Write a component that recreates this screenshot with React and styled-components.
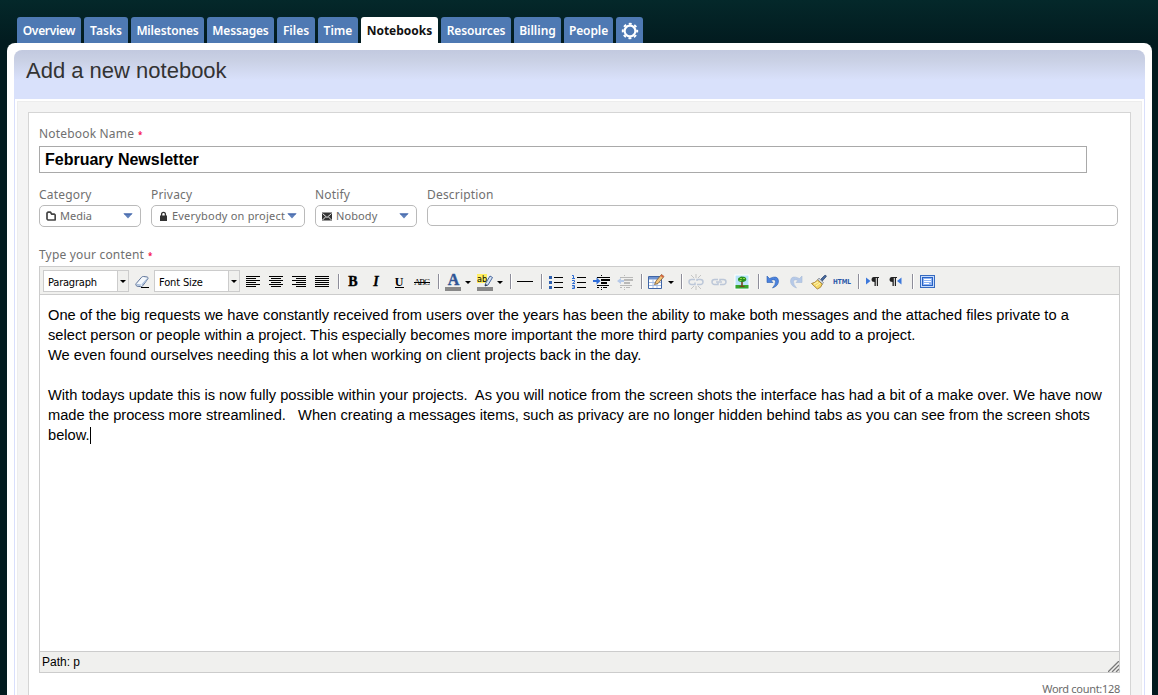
import React from 'react';
import styled, { createGlobalStyle } from 'styled-components';

const lucida = '"Noto Sans", "Open Sans", sans-serif';
const arial = '"Liberation Sans", Arial, sans-serif';

const GlobalStyle = createGlobalStyle`
  * { box-sizing: border-box; }
  body { margin: 0; overflow: hidden; background: #021b1f; font-family: ${lucida}; }
`;

const Page = styled.div`
  height: 695px;
  padding: 17px 6px 0 7px;
  overflow: hidden;
  background: linear-gradient(#04282a 0, #021b1f 43px, #021b1f 100%);
`;

const Tabs = styled.nav`
  display: flex;
  gap: 3px;
  padding-left: 10px;
`;

const Tab = styled.a`
  display: flex;
  align-items: center;
  justify-content: center;
  width: ${p => p.$w}px;
  height: 26px;
  padding-top: 1px;
  border-radius: 3px 3px 0 0;
  background: ${p => (p.$active ? '#fff' : '#4e79b3')};
  color: ${p => (p.$active ? '#111' : '#fff')};
  font-size: 12px;
  font-weight: ${p => (p.$active ? 700 : 600)};
  letter-spacing: ${p => p.$ls || 0}px;
  white-space: nowrap;
`;

const Panel = styled.main`
  height: 660px;
  padding: 7px 7px 0;
  border-radius: 8px 8px 0 0;
  background: #fff;
`;

const Header = styled.header`
  height: 49px;
  padding: 8px 12px 0;
  border-radius: 8px 8px 0 0;
  background: linear-gradient(#c2c9df 0, #c9d0e4 10px, #d9e1fb 30px);
`;

const Title = styled.h1`
  margin: 0;
  font: 22px/26px ${arial};
  color: #333;
`;

const Frame = styled.div`
  height: 610px;
  padding: 2px 2px 0;
  border: solid #d9dffb;
  border-width: 0 1px;
`;

const Mat = styled.div`
  height: 610px;
  padding: 10px 10px 0;
  border: 1px solid #ededed;
  background: #f4f4f4;
`;

const Form = styled.form`
  height: 600px;
  padding: 12px 10px 0;
  border: 1px solid #d5d5d5;
  background: #fff;
`;

const Label = styled.div`
  display: flex;
  align-items: center;
  height: 17px;
  font-size: 12px;
  line-height: 17px;
  color: #707070;
  letter-spacing: ${p => p.$ls || 0.18}px;
  white-space: nowrap;
`;

const Star = styled.span`
  margin-left: 4px;
  padding-top: 2px;
  font-size: 8px;
  font-weight: 700;
  color: #f5104f;
`;

const NameField = styled.div`
  width: 1048px;
  height: 27px;
  margin-top: 4px;
  padding-left: 5px;
  border: 1px solid #a9a9a9;
  font: bold 16px/25px ${arial};
  color: #000;
`;

const Options = styled.div`
  display: flex;
  gap: 10px;
  margin-top: 13px;
`;

const Option = styled.div`
  width: ${p => p.$w}px;
`;

const Picker = styled.div`
  display: flex;
  align-items: center;
  height: ${p => p.$h || 22}px;
  margin-top: 2px;
  padding: 0 7px 0 6px;
  border: 1px solid #bababa;
  border-radius: 5px;
  font-size: 11px;
  letter-spacing: ${p => p.$ls || 0}px;
  color: #6b6b6b;
  white-space: nowrap;

  svg { flex: none; }
  span { flex: 1; margin-left: ${p => p.$gap || 4}px; line-height: 18px; }
`;

const ContentLabel = styled(Label)`
  margin-top: 19px;
`;

const Editor = styled.section`
  display: flex;
  flex-direction: column;
  width: 1081px;
  height: 407px;
  margin-top: 3px;
  border: 1px solid #ccc;
`;

const Toolbar = styled.div`
  display: flex;
  height: 28px;
  padding: 3px;
  border-bottom: 1px solid #ccc;
  background: #f0f0ee;
`;

const Combo = styled.div`
  display: flex;
  width: 86px;
  height: 22px;
  margin-right: 2px;
  border: 1px solid #ccc;
  background: #fff;
  font: 11px/22px "DejaVu Sans Condensed", "DejaVu Sans", sans-serif;
  letter-spacing: ${p => p.$ls || 0}px;
  color: #000;

  span { flex: 1; padding: 1px 0 0 4px; white-space: nowrap; }
`;

const ComboArrow = styled.i`
  display: flex;
  align-items: center;
  justify-content: center;
  width: 11px;
  border-left: 1px solid #ccc;
  background: #f0f0ee;
`;

const Caret = styled.i`
  width: 0;
  height: 0;
  border: solid transparent;
  border-width: 3px 3px 0;
  border-top-color: #000;
`;

const Tool = styled.button`
  display: flex;
  width: ${p => (p.$split ? 32 : 23)}px;
  height: 22px;
  padding: 4px 0 0 3px;
  border: 0;
  background: none;
  opacity: ${p => (p.$off ? 0.35 : 1)};

  svg { flex: none; display: block; overflow: visible; }
  i { margin: 7px 0 0 4px; }
`;

const Divider = styled.i`
  width: 8px;
  height: 15px;
  margin-top: 4px;
  padding-left: 4px;

  &::before { content: ''; display: block; width: 1px; height: 15px; background: #8d8d99; box-shadow: 1px 0 #fff; }
`;

const Copy = styled.div`
  flex: 1;
  padding: 10px 8px;
  font: 14.67px/20px ${arial};
  color: #000;
`;

const Line = styled.div`
  height: 20px;
  white-space: pre;
`;

const Cursor = styled.span`
  display: inline-block;
  width: 1px;
  height: 17px;
  background: #000;
  vertical-align: -4px;
`;

const Status = styled.div`
  display: flex;
  justify-content: space-between;
  align-items: flex-end;
  height: 21px;
  padding-left: 2px;
  border-top: 1px solid #ccc;
  background: #f0f0ee;
  font: 12px/20px ${arial};
  color: #000;

  svg { display: block; }
`;

const WordCount = styled.div`
  width: 1081px;
  margin-top: 8px;
  font-size: 11px;
  line-height: 16px;
  letter-spacing: -0.3px;
  color: #6b6b6b;
  text-align: right;
`;

const Svg = ({ w = 16, h = 16, children }) => (
  <svg width={w} height={h} viewBox={`0 0 ${w} ${h}`} fill="none">{children}</svg>
);

const Bars = ({ rows, color = '#000' }) => (
  <g fill={color}>
    {rows.map(([x, y, w, h = 1], i) => <rect key={i} x={x} y={y} width={w} height={h} />)}
  </g>
);

/* Six text rows; every second one is shortened and starts at x. */
const Align = ({ x = 1, short = 10 }) => (
  <Svg><Bars rows={[0, 1, 2, 3, 4, 5].map(i => (i % 2 ? [x, 2 + i * 2, short] : [1, 2 + i * 2, 14]))} /></Svg>
);

const Glyph = ({ children, x = 8, y = 13, ...rest }) => (
  <text x={x} y={y} textAnchor="middle" fontFamily="Liberation Serif, serif" fontSize="14" fontWeight="bold" fill="#000" {...rest}>{children}</text>
);

const Gear = () => (
  <Svg w={18} h={18}>
    <circle cx="9" cy="9" r="5.4" stroke="#fff" strokeWidth="2.2" />
    <circle cx="9" cy="9" r="7.2" stroke="#fff" strokeWidth="2" strokeDasharray="2.9 2.755" strokeDashoffset="1.45" />
  </Svg>
);

const Folder = () => (
  <Svg w={10} h={11}><path d="M1 2.200 2 1.200h2.500l1.300 2H8.500l.7.800v5H2L1 8Z" stroke="#444" strokeWidth="1.700" strokeLinejoin="round" /></Svg>
);
const Lock = () => (
  <Svg w={10} h={11}><rect x="2" y="4.500" width="7" height="5.500" fill="#333" /><path d="M3.600 5V3.200a1.900 1.900 0 0 1 3.800 0V5" stroke="#333" strokeWidth="1.300" /></Svg>
);
const Mail = () => (
  <Svg w={10} h={9}><rect y=".5" width="10" height="8" fill="#333" /><path d="m.5 1.500 4.500 4 4.500-4M.5 8l3-3M9.500 8l-3-3" stroke="#fff" strokeWidth=".9" /></Svg>
);
const BlueArrow = () => (
  <Svg w={10} h={6}><path d="M.5.500h9L5 5.500Z" fill="#5f80bb" /><path d="M.5.500h9l-1 1h-7Z" fill="#3a5ea5" /></Svg>
);

const Eraser = () => (
  <Svg><path d="M2.200 9.500 7.500 3.300q1-1 2.200-.8l3.500.5q1.500.500.6 1.900L8.700 11.800q-.8 1-2.200.8L3 12.200q-2-.7-.8-2.700Z" fill="#f4f8fc" stroke="#5c7298" /><path d="M2.500 9.800 7 10.500 6.500 12.100 3 11.600ZM7.500 10.300 13.500 3.800v1.500L8 11.700Z" fill="#a9bedb" /><path d="M7 13.500h8" stroke="#000" /></Svg>
);
const ForeColor = () => (
  <Svg><Glyph x="8.500" y="11" fontSize="16" fill="#2f5595" stroke="#2f5595" strokeWidth=".4">A</Glyph><rect y="13" width="16" height="4" fill="#888" /></Svg>
);
const BackColor = () => (
  <Svg><rect width="10" height="9" fill="#ffee62" /><text x="0" y="8" fontFamily="DejaVu Sans Condensed, sans-serif" fontSize="9" fill="#000">ab</text><path d="M8.500 9.500 13 2l2.500 1.500-4.500 7.500-3 1Z" fill="#d5e2f3" stroke="#3a5a94" strokeWidth=".9" /><path d="m8 12 .7-2 1.700 1.200Z" fill="#222" /><rect y="13" width="16" height="4" fill="#888" /></Svg>
);
const BulletList = () => (
  <Svg><Bars rows={[[6, 3, 9], [6, 8, 9], [6, 13, 9]]} /><Bars color="#2d5fae" rows={[[1, 2, 3, 3], [1, 7, 3, 3], [1, 12, 3, 3]]} /></Svg>
);
const NumberList = () => (
  <Svg><Bars rows={[[6, 3, 9], [6, 8, 9], [6, 13, 9]]} /><path d="M1 1.500h1.500v3M1 4.500h3M1 6.500h2.500v1.500L1.500 9.500H4M1 11.500h2.500v3H1M1.500 13h2" stroke="#2d6cd2" /></Svg>
);
const Indent = ({ out }) => (
  <Svg><Bars color={out ? '#555' : '#000'} rows={[[7, 1, 1], [3, 3, 4], [7, 3, 9], [7, 5, 9, 2], [7, 8, 6, 2], [3, 11, 12], [7, 13, 1], [3, 13, 2], [9, 13, 4], [7, 15, 1]]} />
    <path d={out ? 'M4 4 0 7l4 3V8h3V6H4Z' : 'M2.500 3.500 6.500 7l-4 3.500V8H-1V6h3.500Z'} fill={out ? '#4b82dd' : '#2d6cd8'} /></Svg>
);
const Table = () => (
  <Svg><path d="M.5 2.500h13v12H.5Z" fill="#fff" stroke="#3f65a6" /><path d="M1 3h12v2.500H1Z" fill="#6f93d0" /><path d="M1 8.500h12M1 11.500h12M5 5v9M9 5v9" stroke="#a6bee5" /><path d="M6.500 10.500 8 7l5.500-6.500L16 2.500 10 9.500Z" fill="#f3c47c" stroke="#775a32" strokeWidth=".8" /><path d="M13.500.5 16 2.500l-1.200 1.300-2.400-2Z" fill="#d86442" /></Svg>
);
const Chain = ({ broken }) => (
  <Svg><path d="M7 5.500H3.500a2.500 2.500 0 0 0 0 5H7V8.500M9 7V5.500h3.500a2.500 2.500 0 0 1 0 5H9" stroke="#5d7db2" strokeWidth="1.500" />{broken ? <path d="M8 0v4M3 1l3 3M13 1l-3 3M8 12v4M3 15l3-3M13 15l-3-3" stroke="#777" /> : <path d="M5 8h6" stroke="#5d7db2" strokeWidth="1.400" />}</Svg>
);
const Picture = () => (
  <Svg><rect x="1" y="1" width="14" height="14" fill="#b9e4fb" stroke="#fff" /><rect x="1.500" y="11" width="13" height="3.500" fill="#37a52c" /><path d="M7.200 8h1.600v4h1.700v1H5.500v-1h1.700Z" fill="#77451d" /><path d="M5.500 3.500q1.500-1.700 3.500-.8 2.500-.4 3 1.500 1 2.300-1.500 3.300-2.500 1-4 .2-2.500 0-2.500-2.500 0-1.300 1.500-1.700Z" fill="#29901f" /><path d="M6 4h2v1H6ZM9 4h2v1H9ZM5.500 6h2v1h-2Z" fill="#8fda45" /></Svg>
);
const Turn = ({ redo }) => (
  <Svg><g transform={redo ? 'matrix(-1 0 0 1 16 0)' : undefined}><path d="M2 2v6.500h6L6 6.500q4-2 4.500.8.300 3-3 6.700 6-2 6-7Q13 .5 4.500 4.500Z" fill="#4a82df" stroke="#285cac" strokeWidth=".6" /></g></Svg>
);
const Brush = () => (
  <Svg><path d="m9.500 5.500 4-4q1.800-.8 1.800 1l-4 4.500Z" fill="#46699e" stroke="#283f69" strokeWidth=".7" /><path d="M8 4 12.500 8.500l-1.200 1.700L6.500 6Z" fill="#ccd4df" stroke="#6c7480" strokeWidth=".6" /><path d="M6.500 6 11.300 10q-1 4-5 5L.5 9.500Q4 9 6.500 6Z" fill="#f6d968" stroke="#9c7427" strokeWidth=".8" /><path d="m3 10 4-2M5 12l4-3" stroke="#fff6b5" /></Svg>
);
const Para = ({ rtl }) => (
  <Svg><g transform={rtl ? 'translate(-5 0)' : undefined}><path d="M8.500 3H14v1h-1v8h-1.200V4h-1v8H9.500V8Q6.500 8 6.500 5.500T8.500 3Z" fill="#222" /></g><path d={rtl ? 'M13.500 3.500v7L9 7Z' : 'M1 3.500v7L5.500 7Z'} fill="#3c78db" /></Svg>
);
const FullScreen = () => (
  <Svg><rect x="1.500" y="1.500" width="14" height="12" fill="#c7dbfb" stroke="#356ac0" /><rect x="3.500" y="3.500" width="10" height="8" fill="#8fb4f3" stroke="#2862c4" /><path d="M5 5.500h7M5 7.500h7M5 9.500h5" stroke="#fff" /></Svg>
);

const tabs = [['Overview', 64, -0.3], ['Tasks', 44, 0], ['Milestones', 73, -0.15], ['Messages', 67, -0.15], ['Files', 38, 0], ['Time', 40, 0], ['Notebooks', 77, 0], ['Resources', 70, -0.1], ['Billing', 47, 0], ['People', 49, -0.1]];

const lines = [
  'One of the big requests we have constantly received from users over the years has been the ability to make both messages and the attached files private to a',
  'select person or people within a project. This especially becomes more important the more third party companies you add to a project.',
  'We even found ourselves needing this a lot when working on client projects back in the day.',
  '',
  'With todays update this is now fully possible within your projects.  As you will notice from the screen shots the interface has had a bit of a make over. We have now',
  'made the process more streamlined.   When creating a messages items, such as privacy are no longer hidden behind tabs as you can see from the screen shots',
];

export default function App() {
  return (
    <>
      <GlobalStyle />
      <Page>
        <Tabs>
          {tabs.map(([name, w, ls]) => <Tab key={name} $w={w} $ls={ls} $active={name === 'Notebooks'}>{name}</Tab>)}
          <Tab $w={27}><Gear /></Tab>
        </Tabs>
        <Panel>
          <Header><Title>Add a new notebook</Title></Header>
          <Frame>
            <Mat>
              <Form>
                <Label>Notebook Name<Star>*</Star></Label>
                <NameField>February Newsletter</NameField>
                <Options>
                  <Option $w={102}><Label>Category</Label><Picker><Folder /><span>Media</span><BlueArrow /></Picker></Option>
                  <Option $w={154}><Label>Privacy</Label><Picker $ls={0.2}><Lock /><span>Everybody on project</span><BlueArrow /></Picker></Option>
                  <Option $w={102}><Label>Notify</Label><Picker $ls={0.1}><Mail /><span>Nobody</span><BlueArrow /></Picker></Option>
                  <Option $w={691}><Label>Description</Label><Picker $h={21} /></Option>
                </Options>
                <ContentLabel>Type your content<Star>*</Star></ContentLabel>
                <Editor>
                  <Toolbar>
                    <Combo $ls={-0.2}><span>Paragraph</span><ComboArrow><Caret /></ComboArrow></Combo>
                    <Tool><Eraser /></Tool>
                    <Combo $ls={-0.15}><span>Font Size</span><ComboArrow><Caret /></ComboArrow></Combo>
                    <Tool><Align /></Tool>
                    <Tool><Align x={3} /></Tool>
                    <Tool><Align x={5} /></Tool>
                    <Tool><Align short={14} /></Tool>
                    <Divider />
                    <Tool><Svg><Glyph y="12" stroke="#000" strokeWidth=".4">B</Glyph></Svg></Tool>
                    <Tool><Svg><Glyph y="12" fontStyle="italic" stroke="#000" strokeWidth=".3">I</Glyph></Svg></Tool>
                    <Tool><Svg><Glyph y="11.500" fontSize="12">U</Glyph><rect x="4" y="13" width="9" height="1" fill="#000" /></Svg></Tool>
                    <Tool><Svg><Glyph y="11" fontSize="9" fontWeight="normal" textLength="16">ABC</Glyph><rect y="8" width="16" height="1" fill="#000" /></Svg></Tool>
                    <Divider />
                    <Tool $split><ForeColor /><Caret /></Tool>
                    <Tool $split><BackColor /><Caret /></Tool>
                    <Divider />
                    <Tool><Svg><Bars rows={[[0, 7, 16]]} /></Svg></Tool>
                    <Divider />
                    <Tool><BulletList /></Tool>
                    <Tool><NumberList /></Tool>
                    <Tool><Indent /></Tool>
                    <Tool $off><Indent out /></Tool>
                    <Divider />
                    <Tool $split><Table /><Caret /></Tool>
                    <Divider />
                    <Tool $off><Chain broken /></Tool>
                    <Tool $off><Chain /></Tool>
                    <Tool><Picture /></Tool>
                    <Divider />
                    <Tool><Turn /></Tool>
                    <Tool $off><Turn redo /></Tool>
                    <Tool><Brush /></Tool>
                    <Tool><Svg><text x="-1" y="10" fontFamily="DejaVu Sans, sans-serif" fontSize="7" fontWeight="bold" fill="#2b57a8" textLength="18" lengthAdjust="spacingAndGlyphs">HTML</text></Svg></Tool>
                    <Divider />
                    <Tool><Para /></Tool>
                    <Tool><Para rtl /></Tool>
                    <Divider />
                    <Tool><FullScreen /></Tool>
                  </Toolbar>
                  <Copy>
                    {lines.map((text, i) => <Line key={i}>{text}</Line>)}
                    <Line>below.<Cursor /></Line>
                  </Copy>
                  <Status>
                    <span>Path: p</span>
                    <Svg w={11} h={11}><path d="M0 11 11 0M4 11l7-7M8 11l3-3" stroke="#777" strokeWidth="1.300" /></Svg>
                  </Status>
                </Editor>
                <WordCount>Word count:128</WordCount>
              </Form>
            </Mat>
          </Frame>
        </Panel>
      </Page>
    </>
  );
}
